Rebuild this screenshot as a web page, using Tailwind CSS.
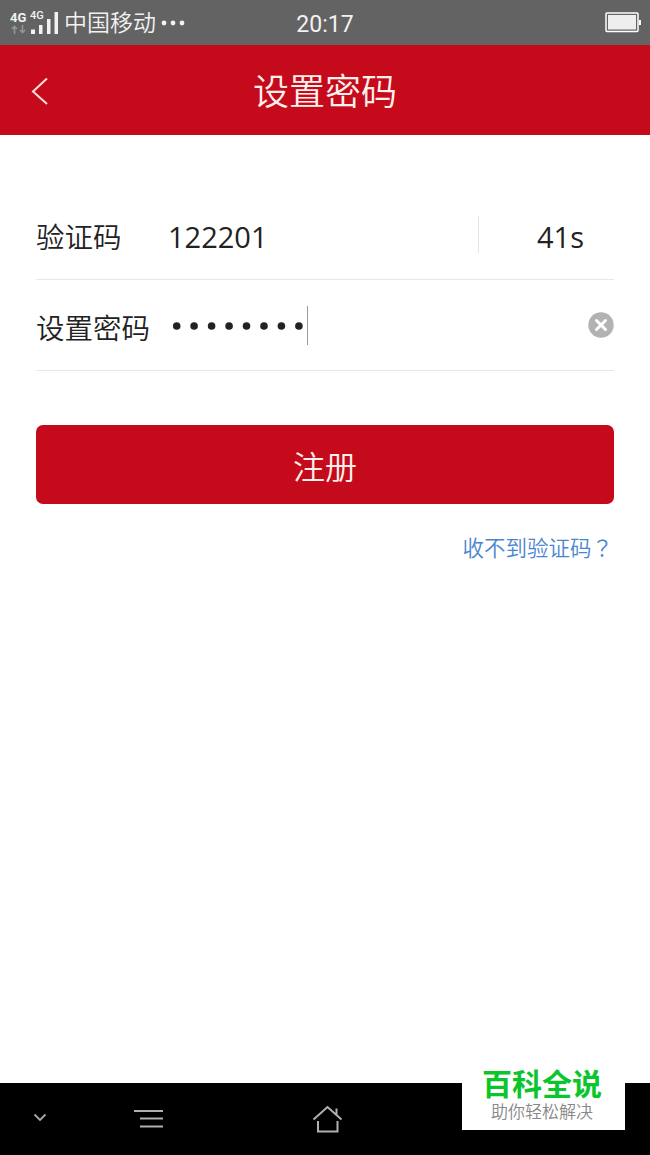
<!DOCTYPE html>
<html lang="zh-CN">
<head>
  <meta charset="UTF-8">
  <meta name="viewport" content="width=device-width, initial-scale=1.0">
  <title>设置密码</title>
  <script src="https://cdn.jsdelivr.net/npm/@tailwindcss/browser@4"></script>
</head>
<body class="bg-white text-[#222] font-['Open_Sans','Noto_Sans_CJK_SC',sans-serif]">
  <div class="relative flex flex-col h-[1155px] w-[650px] overflow-hidden">
    <!-- Status bar -->
    <div class="h-[45px] shrink-0 bg-[#636363] text-[#f2f2f2] grid grid-cols-3 items-center pl-[10px] pr-[9px]">
      <div class="flex items-center">
        <div class="w-[17px] pt-px">
          <p class="font-['Roboto',sans-serif] font-bold text-[13px] leading-[12px]">4G</p>
          <svg class="mt-[1px] block" width="17" height="9" viewBox="0 0 17 9" fill="none" stroke="#959595" stroke-width="1.6">
            <path d="M4.500 9V1.500M2 4l2.500-2.500L7 4M12.500 0v7.500M10 5l2.500 2.500L15 5" />
          </svg>
        </div>
        <div class="relative w-[29px] h-[24px] ml-[3px]">
          <p class="absolute left-0 top-0 font-['Roboto',sans-serif] font-medium text-[11px] leading-[10px]">4G</p>
          <svg class="absolute left-0 top-0" width="29" height="24" viewBox="0 0 29 24" fill="currentColor">
            <path d="M1 18.500h4V23H1zM9 14h3.500v9H9zM17 8h3.500v15H17zM24.500 1H28v22h-3.500z" />
          </svg>
        </div>
        <p class="ml-[5px] text-[23px] leading-[30px] whitespace-nowrap font-[350] pb-[2px]">中国移动</p>
        <svg class="ml-[5px] shrink-0" width="24" height="6" viewBox="0 0 24 6" fill="currentColor">
          <circle cx="3" cy="3" r="2.400" />
          <circle cx="12" cy="3" r="2.400" />
          <circle cx="21" cy="3" r="2.400" />
        </svg>
      </div>
      <p class="text-center text-[23px] leading-[30px] pt-[5px] pr-px font-['Roboto',sans-serif]">20:17</p>
      <svg class="justify-self-end" width="36" height="21" viewBox="0 0 36 21">
        <rect x="1" y="1" width="32" height="18.500" rx="1" fill="none" stroke="#fff" stroke-width="1.500" />
        <rect x="3" y="3" width="28" height="14.500" fill="#eee" />
        <path d="M34 8h2v5h-2z" fill="#fff" />
      </svg>
    </div>

    <!-- Header -->
    <header class="h-[90px] shrink-0 bg-[#c50a1b] text-white flex items-center">
      <svg class="ml-[31px] mt-px" width="18" height="28" viewBox="0 0 18 28" fill="none" stroke="#ffdfd8" stroke-width="2">
        <path d="M16 1.500L2 14.500L16 27" />
      </svg>
      <h1 class="flex-1 text-center pr-[49px] pt-[4px] text-[36px] leading-[44px] font-[350] text-[#fff0ec]">设置密码</h1>
    </header>

    <!-- Form -->
    <main class="flex-1 px-9 pt-[54px]">
      <div class="h-[91px] border-b border-[#e8e8e8] flex items-center">
        <label class="w-[132px] pt-[6px] text-[28.500px] font-[350]">验证码</label>
        <span class="flex-1 pt-[6px] text-[29px]">122201</span>
        <div class="h-[37px] mt-px border-l border-[#e5e5e5]"></div>
        <span class="w-[135px] pl-[28px] pt-[6px] text-center text-[29px]">41s</span>
      </div>
      <div class="h-[91px] border-b border-[#e8e8e8] flex items-center">
        <label class="w-[136px] pt-[6px] text-[28.500px] font-[350]">设置密码</label>
        <svg class="mt-[2px]" width="132" height="10" viewBox="0 0 132 10" fill="#222">
          <circle cx="4.700" cy="5" r="3.800" />
          <circle cx="22.100" cy="5" r="3.800" />
          <circle cx="39.600" cy="5" r="3.800" />
          <circle cx="57.100" cy="5" r="3.800" />
          <circle cx="74.500" cy="5" r="3.800" />
          <circle cx="92" cy="5" r="3.800" />
          <circle cx="109.400" cy="5" r="3.800" />
          <circle cx="126.900" cy="5" r="3.800" />
        </svg>
        <div class="w-px h-[39px] ml-[3px] bg-[#999]"></div>
        <svg class="ml-auto" width="26" height="26" viewBox="0 0 26 26">
          <circle cx="13" cy="13" r="12.700" fill="#b2b2b2" />
          <path d="M8.500 8.500l9 9M17.500 8.500l-9 9" stroke="#fff" stroke-width="3" stroke-linecap="round" />
        </svg>
      </div>
      <button class="block w-full h-[79px] mt-[54px] pt-[5px] rounded-[7px] bg-[#c50a1b] text-[32px] font-[350] text-[#fff0ec]">注册</button>
      <p class="mt-[28px] pr-[1px] text-right text-[21.500px] leading-[30px] font-[350] text-[#4a86cf] font-['Noto_Sans_CJK_SC',sans-serif]">收不到验证码<span lang="zh-TW" class="font-['Noto_Sans_CJK_TC',sans-serif]">？</span></p>
    </main>

    <!-- Navigation bar -->
    <nav class="h-[72px] shrink-0 bg-black flex items-center">
      <svg class="ml-[33px] -mt-[3px]" width="14" height="9" viewBox="0 0 14 9" fill="none" stroke="#aaa" stroke-width="1.800">
        <path d="M1.500 1.500L7 7l5.500-5.500" />
      </svg>
      <svg class="ml-[87px]" width="30" height="20" viewBox="0 0 30 20" fill="none" stroke="#b0b0b0" stroke-width="2">
        <path d="M0 2h29M6 9.500h23M6 17.500h23" />
      </svg>
      <svg class="ml-[148px]" width="32" height="28" viewBox="0 0 32 28" fill="none" stroke="#b0b0b0" stroke-width="2">
        <path d="M1.500 14.500L15.500 2l14 12.500M24.500 9.500V3.500M6 16v10.500h19.500V16" />
      </svg>
    </nav>

    <!-- Badge -->
    <div class="absolute left-[462px] top-[1067px] w-[163px] h-[63px] bg-white text-center whitespace-nowrap font-['Noto_Sans_CJK_SC',sans-serif]">
      <p class="text-[30px] leading-[30px] font-bold text-[#0bc52c] pr-[3px]">百科全说</p>
      <p class="text-[17px] leading-[22px] pt-[3px] font-[350] text-[#888] pr-[3px]">助你轻松解决</p>
    </div>
  </div>
</body>
</html>
